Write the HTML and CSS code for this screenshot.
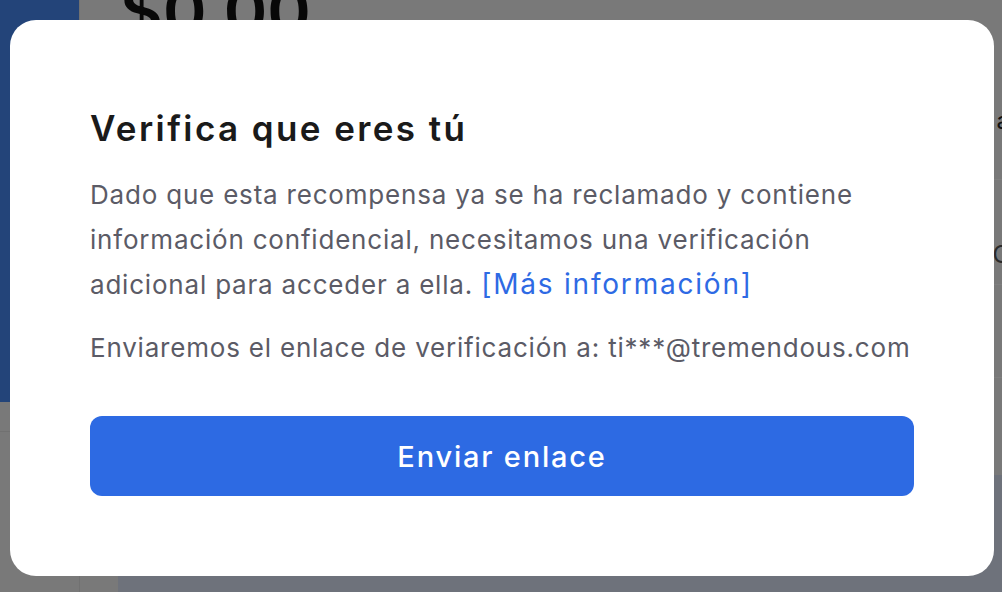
FILE: index.html
```html
<!DOCTYPE html>
<html lang="es">
<head>
    <meta charset="UTF-8">
    <meta name="viewport" content="width=device-width, initial-scale=1.0">
    <title>Verifica que eres tú</title>
    <link rel="stylesheet" href="styles.css">
</head>
<body>
    <div class="page">
        <div class="side">
            <div class="sidebar"></div>
            <div class="side-line"></div>
        </div>
        <div class="main">
            <h1 class="amount">$0.00</h1>
            <div class="rows">
                <div class="row row-head"><span>a</span></div>
                <div class="row row-c"><span>C</span></div>
                <div class="row row-last"></div>
            </div>
            <div class="panel"></div>
        </div>
    </div>
    <div class="mask">
        <div class="dialog">
            <h2 class="title">Verifica que eres tú</h2>
            <p class="text">Dado que esta recompensa ya se ha reclamado y contiene información confidencial, necesitamos una verificación adicional para acceder a ella. <a href="#">[Más información]</a></p>
            <p class="text email">Enviaremos el enlace de verificación a: ti***@tremendous.com</p>
            <button class="send">Enviar enlace</button>
        </div>
    </div>
</body>
</html>
```

FILE: styles.css
```css
*{
    margin: 0;
    padding: 0;
    box-sizing: border-box;
}
body{
    font-family: Inter, "Noto Sans", sans-serif;
    background-color: #f2f2f2;
    overflow: hidden;
}
.page{
    display: flex;
    height: 592px;
}
.side{
    width: 80px;
    border-right: 1px solid #e2e2e2;
}
.sidebar{
    height: 402px;
    background-color: #4688f2;
}
.side-line{
    height: 30px;
    border-bottom: 1px solid #e2e2e2;
}
.main{
    flex: 1;
    display: flex;
    flex-direction: column;
}
.amount{
    font-size: 66px;
    font-weight: 600;
    line-height: 1;
    margin: -22px 0 0 40px;
    color: #111;
}
.rows{
    margin-top: 46px;
}
.row{
    border-bottom: 1px solid #fff;
    display: flex;
    justify-content: flex-end;
    font-size: 24px;
    color: #222;
}
.row span{
    margin-right: -8px;
}
.row-head{
    height: 90px;
    padding-top: 16px;
}
.row-c{
    height: 105px;
    padding-top: 60px;
    color: #555;
}
.row-last{
    height: 93px;
}
.panel{
    margin: auto 0 0 38px;
    height: 117px;
    background-color: #dce4f6;
}
.mask{
    position: fixed;
    top: 0;
    left: 0;
    right: 0;
    bottom: 0;
    background-color: rgba(0,0,0,0.5);
    padding: 20px 8px 16px 10px;
}
.dialog{
    background-color: #fff;
    height: 100%;
    border-radius: 26px;
    padding: 88px 80px 0 80px;
}
.title{
    font-size: 35px;
    font-weight: 600;
    color: #1a1a1a;
    line-height: 40px;
    letter-spacing: 2.4px;
}
.text{
    font-size: 26px;
    line-height: 45px;
    color: #5b5b66;
    margin-top: 24px;
    letter-spacing: 0.8px;
}
.text a{
    color: #2e6ae4;
    text-decoration: none;
    font-size: 28px;
    letter-spacing: 1.8px;
}
.email{
    margin-top: 18px;
}
.send{
    display: block;
    width: 100%;
    height: 80px;
    margin-top: 46px;
    border: none;
    border-radius: 12px;
    background-color: #2d6ae3;
    color: #fff;
    font-family: Inter, "Noto Sans", sans-serif;
    font-size: 29px;
    font-weight: 500;
    letter-spacing: 1.8px;
}
```
